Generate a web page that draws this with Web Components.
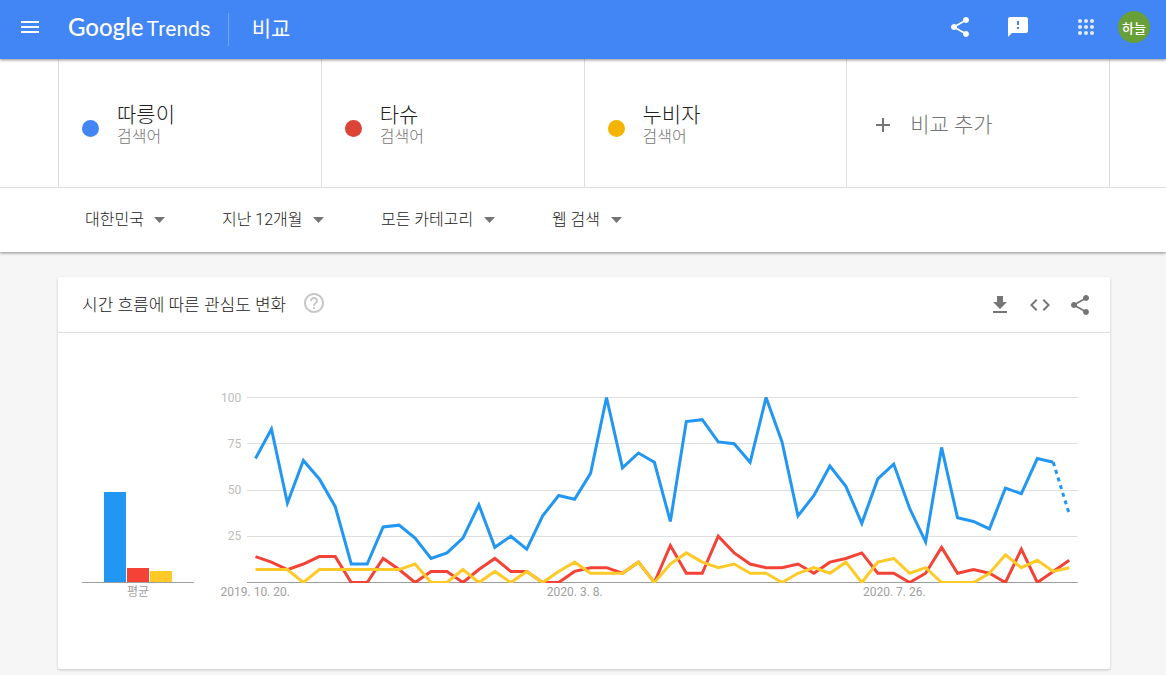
<!DOCTYPE html>
<html lang="ko">
<head>
<meta charset="utf-8">
<meta name="viewport" content="width=device-width, initial-scale=1">
<title>Google Trends - 비교</title>
<style>
  :root {
    --blue: #4285f4;
    --line: #dedede;
    --text: #212121;
    --muted: #757575;
  }
  body {
    margin: 0;
    background: #f6f6f6;
    color: var(--text);
    font-family: Roboto, "Noto Sans CJK KR", sans-serif;
    font-size: 16px;
    font-weight: 300;
  }
</style>
</head>
<body>
<trends-app></trends-app>

<script>
const SERIES = [
  {
    color: '#2196f3',
    average: 49,
    values: [67, 83, 43, 66, 56, 41, 10, 10, 30, 31, 24, 13, 16, 24, 42, 19, 25, 18, 36, 47, 45, 59, 100, 62, 70, 65,
      33, 87, 88, 76, 75, 65, 100, 76, 36, 47, 63, 52, 32, 56, 64, 40, 22, 73, 35, 33, 29, 51, 48, 67, 65, 37],
    partial: true,
  },
  {
    color: '#f44336',
    average: 8,
    values: [14, 11, 7, 10, 14, 14, 0, 0, 13, 7, 0, 6, 6, 0, 7, 13, 6, 6, 0, 0, 6, 8, 8, 5, 11, 0,
      20, 5, 5, 25, 16, 10, 8, 8, 10, 5, 11, 13, 16, 5, 5, 0, 5, 19, 5, 7, 5, 0, 18, 0, 6, 12],
  },
  {
    color: '#ffca28',
    average: 6,
    values: [7, 7, 7, 0, 7, 7, 7, 7, 7, 7, 10, 0, 0, 7, 0, 6, 0, 6, 0, 6, 11, 5, 5, 5, 11, 0,
      10, 16, 11, 8, 10, 5, 5, 0, 5, 8, 5, 11, 0, 11, 13, 5, 8, 0, 0, 0, 5, 15, 8, 12, 6, 8],
  },
];

const TICKS = [
  { week: 0, label: '2019. 10. 20.' },
  { week: 20, label: '2020. 3. 8.' },
  { week: 40, label: '2020. 7. 26.' },
];

const ICONS = {
  menu: '<path d="M3 18h18v-2H3v2zm0-5h18v-2H3v2zm0-7v2h18V6H3z"/>',
  share: '<path d="M18 16.08c-.76 0-1.44.3-1.96.77L8.91 12.7c.05-.23.09-.46.09-.7s-.04-.47-.09-.7l7.05-4.11c.54.5 1.25.81 2.04.81 1.66 0 3-1.34 3-3s-1.34-3-3-3-3 1.34-3 3c0 .24.04.47.09.7L8.04 9.81C7.5 9.31 6.79 9 6 9c-1.66 0-3 1.34-3 3s1.34 3 3 3c.79 0 1.5-.31 2.04-.81l7.12 4.16c-.05.21-.08.43-.08.65 0 1.61 1.31 2.92 2.92 2.92s2.92-1.31 2.92-2.92-1.31-2.92-2.92-2.92z"/>',
  feedback: '<path d="M20 2H4c-1.1 0-1.99.9-1.99 2L2 22l4-4h14c1.1 0 2-.9 2-2V4c0-1.1-.9-2-2-2zm-7 12h-2v-2h2v2zm0-4h-2V6h2v4z"/>',
  apps: [6, 12, 18].map((y) => [6, 12, 18].map((x) => `<circle cx="${x}" cy="${y}" r="2"/>`).join('')).join(''),
  plus: '<path d="M19 13h-6v6h-2v-6H5v-2h6V5h2v6h6v2z"/>',
  help: '<path d="M11 18h2v-2h-2v2zm1-16C6.48 2 2 6.48 2 12s4.48 10 10 10 10-4.48 10-10S17.52 2 12 2zm0 18c-4.41 0-8-3.59-8-8s3.59-8 8-8 8 3.59 8 8-3.59 8-8 8zm0-14c-2.21 0-4 1.79-4 4h2c0-1.1.9-2 2-2s2 .9 2 2c0 2-3 1.75-3 5h2c0-2.25 3-2.5 3-5 0-2.21-1.79-4-4-4z"/>',
  download: '<path d="M19 9h-4V3H9v6H5l7 7 7-7zM5 18v2h14v-2H5z"/>',
  code: '<path d="M9.4 16.6L4.8 12l4.6-4.6L8 6l-6 6 6 6 1.4-1.4zm5.2 0l4.6-4.6-4.6-4.6L16 6l6 6-6 6-1.4-1.4z"/>',
};

class TrendsIcon extends HTMLElement {
  connectedCallback() {
    if (this.shadowRoot) return;
    const shadow = this.attachShadow({ mode: 'open' });
    shadow.innerHTML = `
      <style>
        :host { display: block; width: 24px; height: 24px; }
        svg { display: block; width: 100%; height: 100%; fill: currentColor; }
      </style>
      <svg viewBox="0 0 24 24" aria-hidden="true">${ICONS[this.getAttribute('name')] || ''}</svg>
    `;
  }
}

class IconButton extends HTMLElement {
  connectedCallback() {
    if (this.shadowRoot) return;
    const shadow = this.attachShadow({ mode: 'open' });
    shadow.innerHTML = `
      <style>
        :host { display: block; }
        button { display: flex; align-items: center; justify-content: center; width: 40px; height: 40px; padding: 0; border: 0; border-radius: 50%; background: none; color: inherit; cursor: pointer; }
        button:hover { background: rgba(0,0,0,.06); }
      </style>
      <button type="button" aria-label="${this.getAttribute('label')}"><trends-icon name="${this.getAttribute('icon')}"></trends-icon></button>
    `;
  }
}

class TrendsHeader extends HTMLElement {
  connectedCallback() {
    if (this.shadowRoot) return;
    const shadow = this.attachShadow({ mode: 'open' });
    shadow.innerHTML = `
      <style>
        :host { display: block; position: relative; z-index: 1; background: var(--blue); color: #fff; box-shadow: 0 1px 3px rgba(0,0,0,.45); }
        header { display: flex; align-items: center; height: 54px; padding: 0 16px 5px 10px; }
        .logo { display: flex; align-items: baseline; gap: 3px; margin-left: 18px; padding-top: 2px; color: inherit; text-decoration: none; line-height: 32px; }
        .google { font-family: Lato, sans-serif; font-size: 24px; font-weight: 500; }
        .trends { font-size: 21px; font-weight: 400; }
        h1 { margin: 4px 0 0 17px; padding-left: 23px; border-left: 1px solid rgba(255,255,255,.25); font-size: 21px; font-weight: 400; line-height: 33px; }
        .actions { display: flex; align-items: center; margin-left: auto; }
        .feedback { margin: 0 28px 0 18px; }
        .apps { opacity: .85; }
        .avatar { width: 32px; height: 32px; margin-left: 12px; padding: 0; border: 0; border-radius: 50%; background: #689f38; color: #fff; font: inherit; font-size: 13px; font-weight: 500; cursor: pointer; }
      </style>
      <header>
        <icon-button icon="menu" label="메뉴"></icon-button>
        <a class="logo" href="#"><span class="google">Google</span><span class="trends">Trends</span></a>
        <h1><slot></slot></h1>
        <div class="actions">
          <icon-button icon="share" label="공유"></icon-button>
          <icon-button class="feedback" icon="feedback" label="의견 보내기"></icon-button>
          <icon-button class="apps" icon="apps" label="Google 앱"></icon-button>
          <button class="avatar" type="button">하늘</button>
        </div>
      </header>
    `;
  }
}

class SearchTerm extends HTMLElement {
  connectedCallback() {
    if (this.shadowRoot) return;
    const shadow = this.attachShadow({ mode: 'open' });
    shadow.innerHTML = `
      <style>
        :host { display: flex; align-items: center; gap: 18px; box-sizing: border-box; height: 128px; padding: 10px 23px 0; }
        .dot { flex: none; width: 17px; height: 17px; border-radius: 50%; background: ${this.getAttribute('color')}; }
        .text { padding-bottom: 7px; }
        .name { font-size: 21px; line-height: 24px; }
        .kind { color: var(--muted); font-size: 16px; line-height: 20px; }
      </style>
      <span class="dot"></span>
      <div class="text">
        <div class="name"><slot></slot></div>
        <div class="kind">검색어</div>
      </div>
    `;
  }
}

class AddTerm extends HTMLElement {
  connectedCallback() {
    if (this.shadowRoot) return;
    const shadow = this.attachShadow({ mode: 'open' });
    shadow.innerHTML = `
      <style>
        :host { display: block; }
        button { display: flex; align-items: center; gap: 15px; width: 100%; height: 128px; padding: 4px 24px 0; border: 0; background: none; color: var(--muted); font: inherit; font-size: 21px; line-height: 24px; cursor: pointer; }
        span { padding-bottom: 1px; }
      </style>
      <button type="button"><trends-icon name="plus"></trends-icon><span><slot></slot></span></button>
    `;
  }
}

class TrendsFilter extends HTMLElement {
  connectedCallback() {
    if (this.shadowRoot) return;
    const shadow = this.attachShadow({ mode: 'open' });
    shadow.innerHTML = `
      <style>
        :host { display: grid; align-items: center; }
        select, svg { grid-area: 1 / 1; }
        select { appearance: none; margin: 0; padding: 0 21px 0 0; border: 0; background: none; color: inherit; font: inherit; line-height: 24px; cursor: pointer; }
        svg { justify-self: end; width: 11px; height: 6px; fill: #757575; pointer-events: none; }
      </style>
      <select aria-label="${this.getAttribute('label')}"><option>${this.getAttribute('value')}</option></select>
      <svg viewBox="0 0 11 6" aria-hidden="true"><path d="M0 0h11L5.500 6z"/></svg>
    `;
  }
}

class AverageBars extends HTMLElement {
  connectedCallback() {
    if (this.shadowRoot) return;
    const shadow = this.attachShadow({ mode: 'open' });
    const bars = SERIES.map((s) => `<span style="height:${Math.floor(s.average * 1.85)}px;background:${s.color}"></span>`).join('');
    shadow.innerHTML = `
      <style>
        :host { display: block; width: 112px; color: #9e9e9e; font-size: 12px; font-weight: 400; text-align: center; }
        .bars { display: flex; align-items: flex-end; justify-content: center; gap: 1px; height: 185px; border-bottom: 1px solid #9e9e9e; }
        .bars span { width: 22px; }
        .label { line-height: 18px; }
      </style>
      <div class="bars">${bars}</div>
      <div class="label">평균</div>
    `;
  }
}

class TimeChart extends HTMLElement {
  connectedCallback() {
    if (this.shadowRoot) return;
    const shadow = this.attachShadow({ mode: 'open' });
    shadow.innerHTML = `
      <style>
        :host { display: grid; grid-template-columns: auto 1fr; column-gap: 6px; font-size: 12px; font-weight: 400; }
        .y { display: flex; flex-direction: column; justify-content: space-between; height: 152px; margin-top: -6px; color: #bdbdbd; line-height: 14px; text-align: right; }
        svg { display: block; width: 100%; height: 186px; overflow: hidden; }
        path { fill: none; stroke-width: 3; vector-effect: non-scaling-stroke; }
        .dotted { stroke-dasharray: 4 4; }
        .x { grid-column: 2; display: grid; grid-template-columns: repeat(52, minmax(0, 1fr)); color: #9e9e9e; line-height: 18px; }
        .x span { grid-row: 1; justify-self: center; white-space: nowrap; }
      </style>
      <div class="y"><span>100</span><span>75</span><span>50</span><span>25</span></div>
      <svg viewBox="0 0 831 186" preserveAspectRatio="none" role="img" aria-label="시간 흐름에 따른 관심도 변화">
        ${this.grid()}
        ${SERIES.map((s) => this.line(s)).join('')}
      </svg>
      <div class="x">${TICKS.map((t) => `<span style="grid-column:${t.week + 1}">${t.label}</span>`).join('')}</div>
    `;
  }

  grid() {
    return [0, 46, 93, 139, 185].map((y) => (
      `<rect x="0" y="${y}" width="831" height="1" fill="${y === 185 ? '#9e9e9e' : '#dedede'}"/>`
    )).join('');
  }

  line({ values, color, partial }) {
    const points = values.map((v, i) => `${(8.5 + i * 15.96).toFixed(2)},${(185.5 - v * 1.85).toFixed(2)}`);
    const solid = partial ? points.slice(0, -1) : points;
    let out = `<path stroke="${color}" d="M${solid.join('L')}"/>`;
    // the running week is not complete yet
    if (partial) out += `<path class="dotted" stroke="${color}" d="M${points.slice(-2).join('L')}"/>`;
    return out;
  }
}

class TrendsCard extends HTMLElement {
  connectedCallback() {
    if (this.shadowRoot) return;
    const shadow = this.attachShadow({ mode: 'open' });
    shadow.innerHTML = `
      <style>
        :host { display: block; background: #fff; border-radius: 2px; box-shadow: 0 1px 3px rgba(0,0,0,.2); }
        header { display: flex; align-items: center; box-sizing: border-box; height: 56px; padding: 0 10px 0 24px; border-bottom: 1px solid var(--line); }
        h2 { margin: 0; font-size: 17px; font-weight: inherit; line-height: 24px; }
        .help { margin-left: 8px; padding-bottom: 3px; color: #c6c6c6; }
        .tools { display: flex; margin-left: auto; color: var(--muted); }
        .body { padding: 64px 32px 68px 24px; }
      </style>
      <header>
        <h2><slot name="title"></slot></h2>
        <icon-button class="help" icon="help" label="도움말"></icon-button>
        <div class="tools">
          <icon-button icon="download" label="CSV 다운로드"></icon-button>
          <icon-button icon="code" label="삽입"></icon-button>
          <icon-button icon="share" label="공유"></icon-button>
        </div>
      </header>
      <div class="body"><slot></slot></div>
    `;
  }
}

class TrendsApp extends HTMLElement {
  connectedCallback() {
    if (this.shadowRoot) return;
    const shadow = this.attachShadow({ mode: 'open' });
    shadow.innerHTML = `
      <style>
        :host { display: block; }
        .controls { background: #fff; box-shadow: 0 1px 3px rgba(0,0,0,.45); }
        .terms { padding: 0 56px 0 58px; border-bottom: 1px solid var(--line); }
        .row { display: grid; grid-template-columns: repeat(4, minmax(0, 1fr)); border-right: 1px solid var(--line); }
        .row > * { border-left: 1px solid var(--line); }
        .filters { display: flex; align-items: center; flex-wrap: wrap; gap: 8px 57px; min-height: 64px; padding: 0 56px 0 85px; }
        main { padding: 25px 56px 6px 58px; }
        .charts { display: flex; gap: 27px; }
        time-chart { flex: 1; min-width: 0; }
      </style>
      <trends-header>비교</trends-header>
      <section class="controls">
        <div class="terms">
          <div class="row">
            <search-term color="#4285f4">따릉이</search-term>
            <search-term color="#db4437">타슈</search-term>
            <search-term color="#f4b400">누비자</search-term>
            <add-term>비교 추가</add-term>
          </div>
        </div>
        <div class="filters">
          <trends-filter label="지역" value="대한민국"></trends-filter>
          <trends-filter label="기간" value="지난 12개월"></trends-filter>
          <trends-filter label="카테고리" value="모든 카테고리"></trends-filter>
          <trends-filter label="검색 유형" value="웹 검색"></trends-filter>
        </div>
      </section>
      <main>
        <trends-card>
          <span slot="title">시간 흐름에 따른 관심도 변화</span>
          <div class="charts">
            <average-bars></average-bars>
            <time-chart></time-chart>
          </div>
        </trends-card>
      </main>
    `;
  }
}

customElements.define('trends-icon', TrendsIcon);
customElements.define('icon-button', IconButton);
customElements.define('trends-header', TrendsHeader);
customElements.define('search-term', SearchTerm);
customElements.define('add-term', AddTerm);
customElements.define('trends-filter', TrendsFilter);
customElements.define('average-bars', AverageBars);
customElements.define('time-chart', TimeChart);
customElements.define('trends-card', TrendsCard);
customElements.define('trends-app', TrendsApp);
</script>
</body>
</html>
